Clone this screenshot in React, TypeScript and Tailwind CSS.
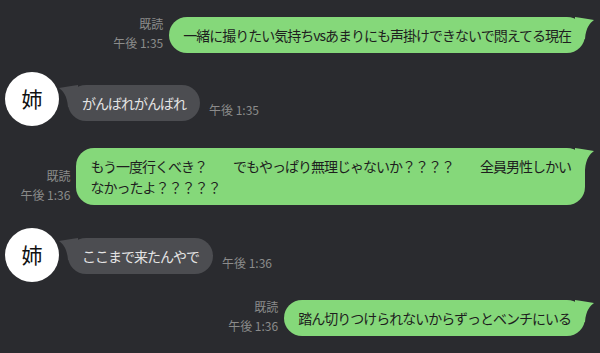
import React from 'react';

const FONT = '[font-family:"Noto_Sans_CJK_JP","Noto_Sans",sans-serif]';

const GreenTail = () => (
  <svg className="absolute top-0 -right-[10px]" width="20" height="24" viewBox="0 0 20 24">
    <path d="M0 0 C7 1 13 2 19 3 C15 6 11 10 10 22 L0 22 Z" fill="#85d87a" />
  </svg>
);

const GrayTail = () => (
  <svg className="absolute top-0 -left-[10px]" width="20" height="24" viewBox="0 0 20 24">
    <path d="M20 0 C13 1 7 2 1 3 C5 6 9 10 10 22 L20 22 Z" fill="#4c4d51" />
  </svg>
);

const ReadMeta = ({ time }: { time: string }) => (
  <div className="flex flex-col items-end text-[12px] leading-[14px] text-[#8b8b8b] gap-[5px] mb-[3px] shrink-0">
    <span>既読</span>
    <span>{time}</span>
  </div>
);

const Sent = ({ children, time, className = '' }: { children: React.ReactNode; time: string; className?: string }) => (
  <div className={`flex justify-end items-end gap-[6px] ${className}`}>
    <ReadMeta time={time} />
    <div className="relative bg-[#85d87a] text-[#1e1e1e] text-[14px] tracking-[-1px] leading-[21px] rounded-[18px] px-[14px] py-[7.5px] whitespace-nowrap">
      <GreenTail />
      <span className="relative">{children}</span>
    </div>
  </div>
);

const Received = ({ text, time, className = '', bubbleTop }: { text: string; time: string; className?: string; bubbleTop: string }) => (
  <div className={`flex items-start ${className}`}>
    <div className="w-[54px] h-[54px] ml-[5px] rounded-full bg-white flex items-center justify-center text-[21px] text-[#111] shrink-0">
      姉
    </div>
    <div className={`flex items-end gap-[9px] ml-[9px] ${bubbleTop}`}>
      <div className="relative bg-[#4c4d51] text-[#e4e4e4] text-[14px] tracking-[-1px] leading-[21px] rounded-[18px] px-[14px] py-[7.5px]">
        <GrayTail />
        <span className="relative">{text}</span>
      </div>
      <span className="text-[12px] leading-[14px] text-[#8b8b8b] mb-[4px]">{time}</span>
    </div>
  </div>
);

export default function App() {
  return (
    <div className={`w-[600px] h-[353px] overflow-hidden bg-[#2a2b2f] pt-[17px] pr-[15px] ${FONT}`}>
      <Sent time="午後 1:35">一緒に撮りたい気持ちvsあまりにも声掛けできないで悶えてる現在</Sent>
      <Received text="がんばれがんばれ" time="午後 1:35" className="mt-[19px]" bubbleTop="mt-[13px]" />
      <Sent time="午後 1:36" className="mt-[22px]">
        もう一度行くべき？　　でもやっぱり無理じゃないか？？？？　　全員男性しかい
        <br />
        なかったよ？？？？？
      </Sent>
      <Received text="ここまで来たんやで" time="午後 1:36" className="mt-[23px]" bubbleTop="mt-[10px]" />
      <Sent time="午後 1:36" className="mt-[18px]">踏ん切りつけられないからずっとベンチにいる</Sent>
    </div>
  );
}
